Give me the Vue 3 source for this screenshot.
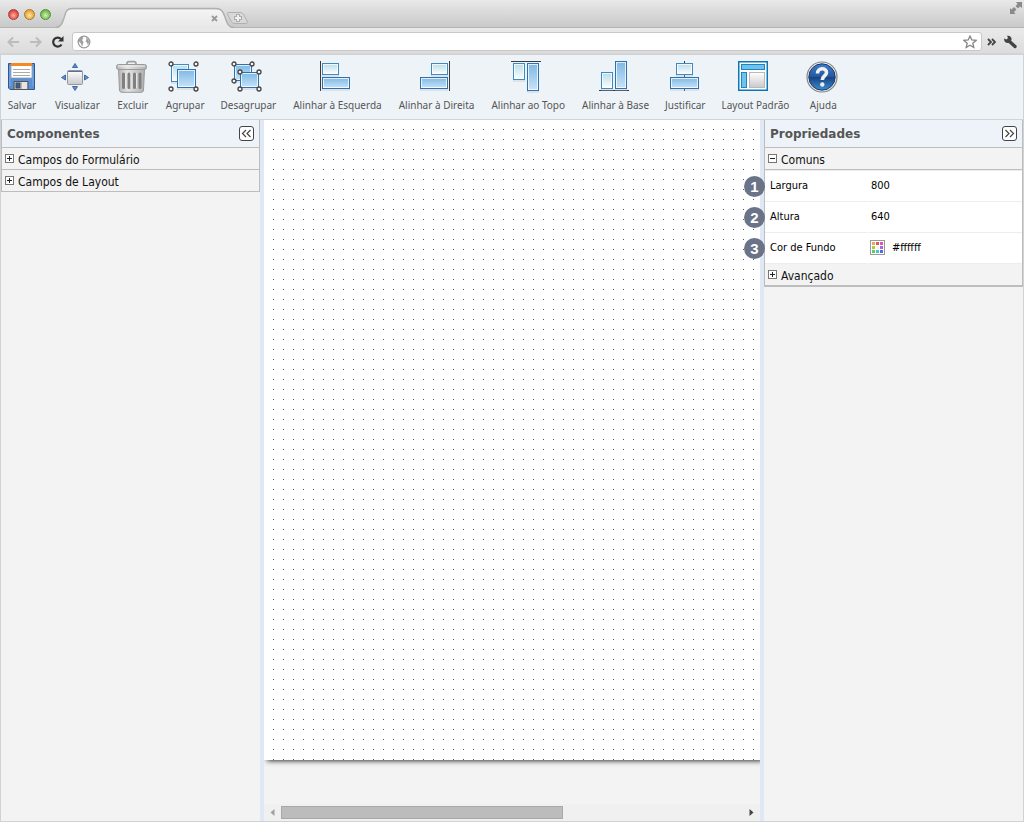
<script setup>
import { ref } from 'vue'

const tools = [
  { id: 'save', label: 'Salvar' },
  { id: 'view', label: 'Visualizar' },
  { id: 'trash', label: 'Excluir' },
  { id: 'group', label: 'Agrupar' },
  { id: 'ungroup', label: 'Desagrupar', wide: true },
  { id: 'left', label: 'Alinhar à Esquerda', wide: true },
  { id: 'right', label: 'Alinhar à Direita', wide: true },
  { id: 'top', label: 'Alinhar ao Topo', wide: true },
  { id: 'base', label: 'Alinhar à Base', wide: true },
  { id: 'justify', label: 'Justificar' },
  { id: 'layout', label: 'Layout Padrão', wide: true },
  { id: 'help', label: 'Ajuda' }
]

// Rectangles of the alignment icons: [x, y, width, height, fill]
const blocks = {
  left: [[2, 2, 16, 11, 'pale'], [2, 16, 27, 11, 'sky']],
  right: [[11, 2, 16, 11, 'pale'], [0, 16, 27, 11, 'sky']],
  top: [[2, 2, 11, 16, 'pale'], [16, 2, 11, 27, 'sky']],
  base: [[2, 11, 11, 16, 'pale'], [16, 0, 11, 27, 'sky']],
  justify: [[8, 2, 16, 11, 'pale'], [2, 16, 28, 11, 'sky']],
  group: [[3, 3, 17, 17, 'pale'], [9, 8, 18, 18, 'sky']],
  ungroup: [[3, 3, 17, 16, 'sky'], [9, 11, 18, 15, 'sky']]
}
const rules = {
  left: 'M.5 0V30',
  right: 'M29.5 0V30',
  top: 'M0 .5H30',
  base: 'M0 29.5H30',
  justify: 'M16.5 0V30'
}
const handles = {
  group: [[3, 3], [28, 3], [3, 28], [28, 28]],
  ungroup: [[3, 3], [21, 3], [3, 20], [9, 11], [28, 11], [9, 28], [28, 28]]
}

const width = ref('800')
const height = ref('640')
const background = ref('#ffffff')
const swatches = ['#e8a850', '#e05858', '#e850b8', '#a8cc40', '#f4f4f4', '#a868e0', '#58d058', '#50bce0', '#5868e0']
</script>

<template>
  <div class="page">
    <header class="browser">
      <div class="titlebar">
        <div class="lights"><i class="red"></i><i class="amber"></i><i class="green"></i></div>
        <svg class="tab" width="196" height="22" viewBox="0 0 196 22">
          <defs>
            <linearGradient id="tabfill" x1="0" y1="0" x2="0" y2="1">
              <stop offset="0" stop-color="#f4f4f4" /><stop offset="1" stop-color="#e7e7e7" />
            </linearGradient>
          </defs>
          <path d="M0 21.5C5 20.500 6 18 8 12C10 5 11 2.500 16 2.500H160C165 2.500 167 5 169 11C171 18 173 21 178 21.500V22H0Z" fill="url(#tabfill)" />
          <path d="M0 20.500C5 19.500 6 17 8 11C10 4 11 1.500 16 1.500H160C165 1.500 167 4 169 10C171 17 173 20.500 178 20.500" fill="none" stroke="#b0b0b0" stroke-width="1.500" />
          <path d="M156 9l5 5m0-5l-5 5" stroke="#999" stroke-width="1.800" />
          <path d="M173 5.500H184C186 5.500 187 6.500 188 8L191 14C192 16 191 16.500 189 16.500H179C177 16.500 176 15.500 175 14L172 8C171 6 171 5.500 173 5.500Z" fill="#d8d8d8" stroke="#b0b0b0" />
          <path d="M182 7v8m-4-4h8" stroke="#adadad" stroke-width="4" />
          <path d="M182 8v6m-3-3h6" stroke="#f0f0f0" stroke-width="2" />
        </svg>
        <svg class="expand" width="12" height="12" viewBox="0 0 12 12">
          <path d="M6 0h6v6L10 4.500 8 6.500 5.500 4 7.500 2ZM0 6l1.500 1.500L4 5 6.500 7.500 4 10 5.500 12H0Z" fill="#8a8a8a" />
        </svg>
      </div>
      <div class="navbar">
        <button class="nav" aria-label="Voltar"><svg width="13" height="12" viewBox="0 0 13 12"><path d="M12 6H2M6 1.500L1.500 6 6 10.500" fill="none" stroke="#bcbcbc" stroke-width="2" /></svg></button>
        <button class="nav" aria-label="Avançar"><svg width="13" height="12" viewBox="0 0 13 12"><path d="M1 6H11M7 1.500L11.500 6 7 10.500" fill="none" stroke="#bcbcbc" stroke-width="2" /></svg></button>
        <button class="nav" aria-label="Recarregar"><svg width="13" height="12" viewBox="0 0 13 12"><path d="M10 3A4.500 4.500 0 1 0 10.500 8.500" fill="none" stroke="#333" stroke-width="2.200" /><path d="M12.500 0V5.500H7Z" fill="#333" /></svg></button>
        <div class="address">
          <svg width="14" height="14" viewBox="0 0 14 14"><circle cx="7" cy="7" r="5.800" fill="#fff" stroke="#999" stroke-width="1.300" /><path d="M2 4L5 1.500 6.500 3 5 5 6.500 7 6 9 5 12 4 8.500 2 6.500ZM9 2.500L11.500 4 12 8 10.500 9.500 10 7.500 8.500 6.500 9.500 4.500Z" fill="#a0a0a0" /></svg>
          <input type="text" aria-label="Endereço" />
          <svg width="14" height="14" viewBox="0 0 14 14"><path d="M7 1L8.800 5 13 5.400 9.800 8.200 10.800 12.500 7 10.200 3.200 12.500 4.200 8.200 1 5.400 5.200 5Z" fill="#fff" stroke="#858585" stroke-width="1.300" /></svg>
        </div>
        <button class="nav more" aria-label="Mais"><svg width="9" height="8" viewBox="0 0 9 8"><path d="M1 1l3 3-3 3M5 1l3 3-3 3" fill="none" stroke="#444" stroke-width="1.800" /></svg></button>
        <button class="nav" aria-label="Configurações"><svg width="14" height="14" viewBox="0 0 14 14"><path d="M6 6L12 11.500" stroke="#444" stroke-width="3.400" stroke-linecap="round" /><path d="M1 3.500L3.500 4.500 5 3 4 .800C7 .300 9 2 8.500 5L6 8C3 8.500 1 7 1 3.500Z" fill="#444" /></svg></button>
      </div>
    </header>

    <div class="app">
      <nav class="toolbar">
        <button v-for="t in tools" :key="t.id" class="tool" :class="{ wide: t.wide }">
          <svg class="icon" width="32" height="32" viewBox="0 0 32 32" aria-hidden="true">
            <defs>
              <linearGradient :id="t.id + '-pale'" x1="0" y1="0" x2="0" y2="1"><stop offset="0" stop-color="#b5dcea" /><stop offset="1" stop-color="#fff" /></linearGradient>
              <linearGradient :id="t.id + '-sky'" x1="0" y1="0" x2="0" y2="1"><stop offset="0" stop-color="#7db8e4" /><stop offset="1" stop-color="#c9e3f8" /></linearGradient>
              <linearGradient :id="t.id + '-grey'" x1="0" y1="0" x2="1" y2="0"><stop offset="0" stop-color="#b4b4b4" /><stop offset=".35" stop-color="#e4e4e4" /><stop offset="1" stop-color="#b0b0b0" /></linearGradient>
              <linearGradient :id="t.id + '-blue'" x1="0" y1="0" x2="0" y2="1"><stop offset="0" stop-color="#3f7fca" /><stop offset=".48" stop-color="#2459a0" /><stop offset=".52" stop-color="#184583" /><stop offset="1" stop-color="#3d8ed2" /></linearGradient>
              <linearGradient :id="t.id + '-metal'" x1="0" y1="0" x2="0" y2="1"><stop offset="0" stop-color="#fff" /><stop offset="1" stop-color="#c9c9cc" /></linearGradient>
            </defs>
            <path v-if="rules[t.id]" :d="rules[t.id]" stroke="#3a3a3a" />
            <g v-for="(b, i) in blocks[t.id]" :key="i">
              <rect :x="b[0] + .5" :y="b[1] + 2" :width="b[2]" :height="b[3]" fill="none" stroke="#b9c1ca" stroke-opacity=".6" />
              <rect :x="b[0] + .5" :y="b[1] + .5" :width="b[2]" :height="b[3]" :fill="`url(#${t.id}-${b[4]})`" :stroke="b[4] === 'pale' ? '#3d8bc2' : '#2d72ae'" />
              <rect :x="b[0] + 1.500" :y="b[1] + 1.500" :width="b[2] - 2" :height="b[3] - 2" fill="none" stroke="#fff" stroke-opacity=".75" />
            </g>
            <circle v-for="(h, i) in handles[t.id]" :key="'h' + i" :cx="h[0]" :cy="h[1]" r="2" fill="#f4f4f4" stroke="#444" stroke-width="1.300" />

            <g v-if="t.id === 'save'">
              <path d="M3.500 2.500H29.500V28.500H5L3.500 27Z" fill="#5b91d4" stroke="#2e5794" />
              <path d="M6 2.500H27V17H6Z" fill="#fff" stroke="#8d9bb0" stroke-width=".8" />
              <path d="M6 2H27V5H6Z" fill="#f28a22" />
              <path d="M8 8.500H25M8 11.500H25M8 14.500H25" stroke="#aaa" />
              <path d="M9 20.500H23V28.500H9Z" fill="#b8b8b8" stroke="#555" />
              <path d="M11 22H15V27H11Z" fill="#3a5f96" stroke="#444" stroke-width=".7" />
              <path d="M17 21H22V28H17Z" fill="#e5e5e5" />
              <path d="M5 5V25M28 6V25" stroke="#86b5ea" stroke-width=".8" />
            </g>
            <g v-if="t.id === 'view'">
              <path d="M15 2.500L17.500 6.500H12.500ZM15 29.500L17.500 25.500H12.500ZM1.500 16.500L5.500 14V19ZM28.500 16.500L24.500 14V19Z" fill="#628ecb" stroke="#4069a5" />
              <rect x="7.500" y="9.500" width="15" height="14" rx="1" fill="url(#view-metal)" stroke="#95979b" />
              <path d="M8 10.500H22" stroke="#4d73ac" />
            </g>
            <g v-if="t.id === 'trash'">
              <path d="M11 5V2.500C11 1 12 .700 13 .700H18C19.500 .700 20 1.500 20 3V5" fill="none" stroke="#a0a0a0" stroke-width="1.800" />
              <path d="M2.500 8H28.500L27.500 29C27.500 30.500 26.500 31.300 25 31.300H6C4.500 31.300 3.500 30.500 3.500 29Z" fill="url(#trash-grey)" stroke="#999" />
              <rect x=".500" y="3.500" width="30" height="5" rx="2" fill="url(#trash-grey)" stroke="#999" />
              <path d="M2 5H29" stroke="#f2f2f2" />
              <path d="M7.500 13V26.500M13 13V26.500M18.500 13V26.500M24 13V26.500" stroke="#808080" stroke-width="3" stroke-linecap="round" />
              <path d="M9.500 12V27M15 12V27M20.500 12V27" stroke="#ececec" stroke-width=".8" />
            </g>
            <g v-if="t.id === 'layout'">
              <rect x=".750" y=".750" width="28.500" height="28.500" fill="#fff" stroke="#0878b8" stroke-width="1.500" />
              <rect x="3.500" y="3.500" width="23" height="5" fill="#6dc3f0" stroke="#2583ba" />
              <rect x="3.500" y="11.500" width="5" height="15" fill="#6dc3f0" stroke="#2583ba" />
              <rect x="11.500" y="11.500" width="15" height="15" fill="url(#layout-metal)" stroke="#b8b8b8" />
            </g>
            <g v-if="t.id === 'help'">
              <circle cx="16" cy="16" r="15" fill="#eee" stroke="#858585" stroke-width="1.200" />
              <circle cx="16" cy="16" r="13.200" fill="url(#help-blue)" stroke="#163a6b" />
              <path d="M11.500 12.500C11.500 6.500 20.500 6.300 20.500 11.500C20.500 15 16.300 15 16.300 19" fill="none" stroke="#f1f1f1" stroke-width="3.600" />
              <circle cx="16.300" cy="23.500" r="2.200" fill="#eee" />
            </g>
          </svg>
          <span>{{ t.label }}</span>
        </button>
      </nav>

      <main class="workspace">
        <aside class="panel components">
          <div class="head">
            <h2>Componentes</h2>
            <button class="collapse" aria-label="Recolher componentes"><svg width="15" height="15" viewBox="0 0 15 15"><rect x=".500" y=".500" width="14" height="14" rx="2.500" fill="#fff" stroke="#444" /><path d="M7 4L3.500 7.500 7 11M11.500 4L8 7.500 11.500 11" fill="none" stroke="#444" stroke-width="1.200" /></svg></button>
          </div>
          <button class="node"><i class="toggle plus"></i>Campos do Formulário</button>
          <button class="node"><i class="toggle plus"></i>Campos de Layout</button>
        </aside>

        <section class="editor">
          <div class="canvas"></div>
          <div class="scrollbar">
            <button aria-label="Rolar à esquerda"><svg width="5" height="7" viewBox="0 0 5 7"><path d="M4.500 0V7L.500 3.500Z" fill="#a0a0a0" /></svg></button>
            <div class="track"><div class="thumb"></div></div>
            <button aria-label="Rolar à direita"><svg width="5" height="7" viewBox="0 0 5 7"><path d="M.500 0V7L4.500 3.500Z" fill="#444" /></svg></button>
          </div>
        </section>

        <aside class="panel properties">
          <div class="head">
            <h2>Propriedades</h2>
            <button class="collapse" aria-label="Recolher propriedades"><svg width="15" height="15" viewBox="0 0 15 15"><rect x=".500" y=".500" width="14" height="14" rx="2.500" fill="#fff" stroke="#444" /><path d="M3.500 4L7 7.500 3.500 11M8 4L11.500 7.500 8 11" fill="none" stroke="#444" stroke-width="1.200" /></svg></button>
          </div>
          <button class="node"><i class="toggle"></i>Comuns</button>
          <div class="props">
            <div class="prop">
              <span class="badge">1</span>
              <label for="width">Largura</label>
              <div class="value"><input id="width" v-model="width" type="text" /></div>
            </div>
            <div class="prop">
              <span class="badge">2</span>
              <label for="height">Altura</label>
              <div class="value"><input id="height" v-model="height" type="text" /></div>
            </div>
            <div class="prop">
              <span class="badge">3</span>
              <label for="background">Cor de Fundo</label>
              <div class="value">
                <button class="swatch" aria-label="Escolher cor">
                  <svg width="15" height="15" viewBox="0 0 15 15">
                    <rect x=".500" y=".500" width="14" height="14" fill="#fff" stroke="#999" />
                    <rect v-for="(c, i) in swatches" :key="c" :x="2 + (i % 3) * 4" :y="2 + Math.floor(i / 3) * 4" width="3" height="3" :fill="c" />
                  </svg>
                </button>
                <input id="background" v-model="background" type="text" />
              </div>
            </div>
          </div>
          <button class="node last"><i class="toggle plus"></i>Avançado</button>
        </aside>
      </main>
    </div>
  </div>
</template>

<style>
html, body { margin: 0; background: #f3f3f3; }
</style>

<style scoped>
* { box-sizing: border-box; }
button { margin: 0; padding: 0; border: 0; background: none; font: inherit; color: inherit; }
input { border: 0; padding: 0; min-width: 0; background: transparent; outline: 0; font: inherit; color: inherit; }
svg { display: block; flex: none; }
.page { display: flex; flex-direction: column; min-height: 100vh; font-family: "Noto Sans", "Open Sans", sans-serif; }

.titlebar { display: flex; height: 28px; padding: 0 2px 0 8px; background: linear-gradient(#e9e9e9, #e2e2e2 20%, #c9c9c9); border-bottom: 1px solid #b4b4b4; }
.lights { display: flex; gap: 5px; padding-top: 9px; }
.lights i { width: 11px; height: 11px; border: 1px solid #777; border-radius: 50%; }
.lights .red { background: radial-gradient(circle at 50% 60%, #ffb0a5, #e3463f 65%); border-color: #a5403c; }
.lights .amber { background: radial-gradient(circle at 50% 60%, #ffe7a5, #e8a733 65%); border-color: #a57932; }
.lights .green { background: radial-gradient(circle at 50% 60%, #cdf5ad, #75ba4f 65%); border-color: #558a3d; }
.tab { margin: 7px auto -1px 5px; }
.expand { margin-top: 2px; }
.navbar { display: flex; align-items: center; height: 26px; padding: 2px 7px 0; gap: 9px; background: linear-gradient(#eaeaea, #dcdcdc); border-bottom: 1px solid #d4d4d4; }
.nav { flex: none; }
.address { display: flex; flex: 1; align-items: center; height: 19px; margin: 0 -4px 0 -1px; padding: 0 4px; background: #fff; border: 1px solid #c8c8c8; border-radius: 3px; }
.address input { flex: 1; font-size: 12px; }
.more { margin-right: -2px; }

.app { display: flex; flex: 1; flex-direction: column; border: 1px solid #cfd2d6; }
.toolbar { display: flex; gap: 15px; height: 65px; padding: 6px 0 0 3px; background: #eef3f8; border-bottom: 1px solid #cfd4d9; }
.tool { display: flex; flex: none; flex-direction: column; align-items: center; min-width: 36px; color: #555; font-size: 10px; line-height: 14px; white-space: nowrap; }
.wide { padding: 0 1px; }
.icon { margin: 0 2px 5px 0; overflow: visible; }

.workspace { display: flex; flex: 1; }
.panel { flex: none; width: 259px; background: #f3f3f3; font-family: "DejaVu Sans Condensed", "Noto Sans", sans-serif; font-size: 12px; }
.head { display: flex; align-items: center; justify-content: space-between; height: 28px; padding: 0 5px; background: #edf3f8; border: 1px solid #bdbdbd; border-top: 0; }
h2 { margin: 0; color: #555; font: bold 12px/16px "DejaVu Sans", sans-serif; }
.node { display: flex; align-items: center; gap: 4px; width: 100%; height: 22px; padding: 2px 3px 0; border: 1px solid #bdbdbd; border-top: 0; background: #f3f3f3; color: #111; line-height: 16px; text-align: left; }
.toggle { flex: none; width: 9px; height: 9px; margin-bottom: 3px; border: 1px solid #777; background: linear-gradient(#222, #222) center / 5px 1px no-repeat, #fff; }
.toggle.plus { background: linear-gradient(#222, #222) center / 5px 1px no-repeat, linear-gradient(#222, #222) center / 1px 5px no-repeat, #fff; }

.editor { display: flex; flex: 1; flex-direction: column; min-width: 0; background: #f3f3f3; border: solid #dfe8f6; border-width: 0 4px; overflow: hidden; }
.canvas { height: 640px; background: conic-gradient(from 270deg at 1px 1px, #555 90deg, #fff 0) 9px 9px / 10px 10px; box-shadow: 3px 1px 5px #333; }
.scrollbar { display: flex; align-items: center; height: 17px; margin-top: auto; background: #f0f0f0; }
.scrollbar button { display: flex; flex: none; align-items: center; justify-content: center; width: 17px; height: 17px; }
.track { flex: 1; }
.thumb { width: 61%; height: 13px; border: 1px solid #a8a8a8; background: #bcbcbc; }

.props { padding-top: 1px; border: solid #bdbdbd; border-width: 0 1px; background: #ededed; }
.prop { position: relative; display: grid; grid-template-columns: 102px minmax(0, 1fr); gap: 1px; height: 31px; background: #fff; color: #000; font-size: 11px; }
.prop label, .value { display: flex; align-items: center; padding-bottom: 1px; border-bottom: 1px solid #ededed; }
.prop label { padding-left: 5px; }
.value { gap: 7px; padding-left: 3px; }
.value input { flex: 1; }
.swatch { margin-left: -1px; }
.badge { position: absolute; z-index: 1; top: 5px; left: -21px; width: 21px; height: 21px; border-radius: 50%; background: #6b7388; color: #fff; font: bold 15px/21px "Liberation Sans", sans-serif; text-align: center; }
.last { height: 23px; border-bottom-width: 2px; }
</style>
